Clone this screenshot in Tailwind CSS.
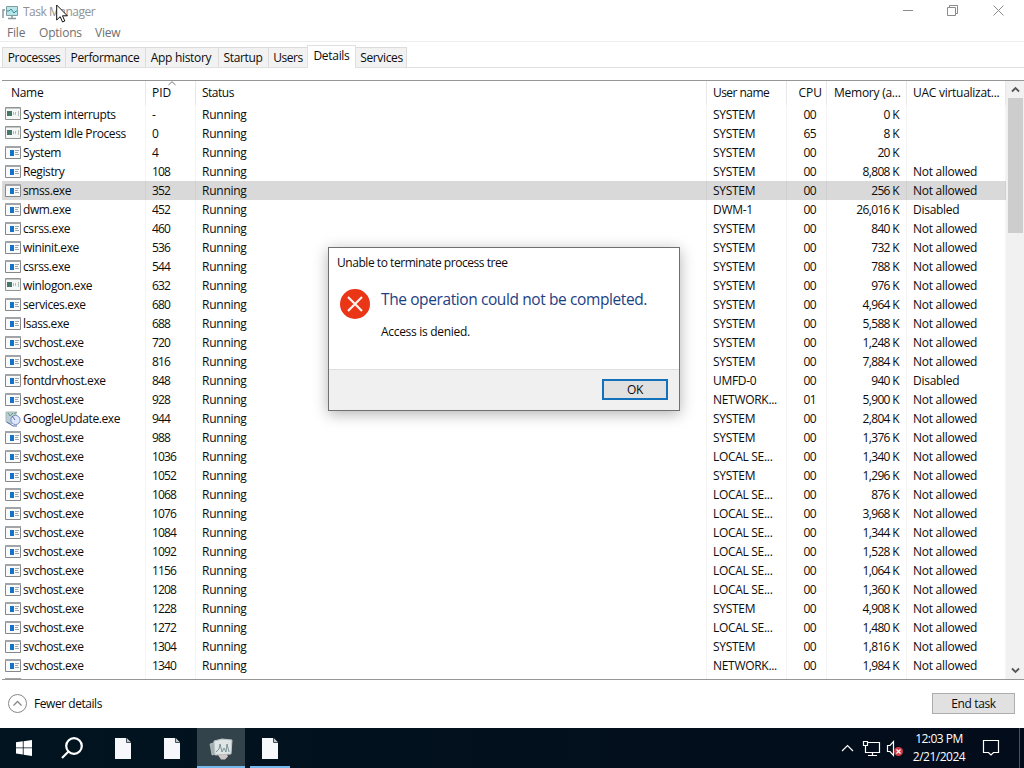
<!DOCTYPE html>
<html lang="en">
<head>
    <meta charset="UTF-8">
    <meta name="viewport" content="width=device-width, initial-scale=1.0">
    <title>Task Manager</title>
    <script src="https://cdn.jsdelivr.net/npm/@tailwindcss/browser@4"></script>
</head>
<body class="w-[1024px] h-[768px] overflow-hidden bg-white font-['Open_Sans','Noto_Sans',sans-serif] text-[12px] leading-[19px] text-[#0c0c0c]">
    <!-- Shared icons -->
    <svg class="hidden">
        <symbol id="icon-app" viewBox="0 0 16 13">
            <path d="M.5.5h15v12H.5z" fill="#fafafa" stroke="#85888b"/>
            <path d="M0 0h16v2H0z" fill="#a2a5a8"/>
            <path d="M5 4h4v6H5z" fill="#1473c8"/>
            <path d="M10 4.500h4M10 6.500h3M10 8.500h4" stroke="#9ba7b0"/>
        </symbol>
        <symbol id="icon-sys" viewBox="0 0 16 13">
            <path d="M.5.5h15v12H.5z" fill="#f5f7f6" stroke="#8f9392"/>
            <path d="M1 1.500h14" stroke="#c3c8c6"/>
            <path d="M2 4h5v5H2z" fill="#44776a"/>
            <path d="M8.500 5v3M10.500 5v3M13.500 4v5" stroke="#b5bdb9"/>
        </symbol>
        <symbol id="icon-update" viewBox="0 0 16 16">
            <path d="M1 1h10v9l-6 3-4-2z" fill="#b9cdd2" stroke="#a6bac0"/>
            <path d="M3 2l2 3 3-3M9 3l3-2" fill="none" stroke="#6d9d7c"/>
            <circle cx="10.500" cy="9" r="4.600" fill="#dfe7fa" stroke="#7b8fc4"/>
            <path d="M7 5l3 4M2 11l3 2 3 2h4" fill="none" stroke="#5369a6"/>
        </symbol>
        <symbol id="icon-file" viewBox="0 0 16 21">
            <path d="M0 0h11.500L16 4.500V21H0z" fill="#f6f8fb"/>
            <path d="M11.500 0v4.500H16" fill="#bcc5ca" stroke="#43515a"/>
        </symbol>
    </svg>

    <!-- Task Manager window -->
    <main class="flex h-[728px] flex-col">
        <header class="flex h-[24px] justify-between text-[#929292]">
            <div class="flex items-center">
                <svg class="ml-[2px] h-[15px] w-[17px]" viewBox="0 0 17 15" fill="none">
                    <path d="M4.500 1.500h11v9h-11z" fill="#b9e5e8" stroke="#829da2"/>
                    <path d="M5 6h2l2-2 3 4 2-2h1" stroke="#318e98"/>
                    <path d="M1 13V5h2M10 11v2M6 13.500h8" stroke="#87999e" stroke-width="1.500"/>
                </svg>
                <span class="-mt-px ml-[4px] tracking-[-0.5px]">Task Manager</span>
            </div>
            <svg class="h-[24px] w-[138px]" viewBox="0 0 138 24" fill="none" stroke="#8b8b8b">
                <path d="M17 10.500h10"/>
                <path d="M61.500 7.500h8v8h-8zM63.500 7v-1.500h8v8H70"/>
                <path d="M107.500 5.500l10 10M117.500 5.500l-10 10"/>
            </svg>
        </header>
        <nav class="flex h-[18px] gap-[14px] border-b border-[#ededed] pl-[7px] leading-[18px] tracking-[-0.2px] text-[#707070]">
            <span class="w-[18px]">File</span>
            <span class="w-[42px]">Options</span>
            <span>View</span>
        </nav>
        <div class="flex h-[26px] shrink-0 items-end border-b border-[#e0e0e0] pl-[2px] leading-[20px] tracking-[-0.35px] whitespace-nowrap">
            <div class="flex h-[20px] w-[63px] justify-center border border-r-0 border-b-0 border-[#dcdcdc] bg-[#f2f2f2]">Processes</div>
            <div class="flex h-[20px] w-[80px] justify-center border border-r-0 border-b-0 border-[#dcdcdc] bg-[#f2f2f2] pr-px">Performance</div>
            <div class="flex h-[20px] w-[73px] justify-center border border-r-0 border-b-0 border-[#dcdcdc] bg-[#f2f2f2] pr-[2px] tracking-[-0.3px]">App history</div>
            <div class="flex h-[20px] w-[50px] justify-center border border-r-0 border-b-0 border-[#dcdcdc] bg-[#f2f2f2] pr-px">Startup</div>
            <div class="flex h-[20px] w-[39px] justify-center border border-r-0 border-b-0 border-[#dcdcdc] bg-[#f2f2f2]  tracking-[-0.5px]">Users</div>
            <div class="-mb-px flex h-[23px] w-[49px] justify-center border-x border-t border-[#e0e0e0] bg-white tracking-[-0.3px]">Details</div>
            <div class="flex h-[20px] w-[51px] justify-center border border-l-0 border-b-0 border-[#dcdcdc] bg-[#f2f2f2] pl-px">Services</div>
        </div>
        <div class="h-[12px] shrink-0"></div>

        <!-- Process list -->
        <section class="ml-[2px] flex h-[600px] shrink-0 border-y border-[#969696]">
            <div class="relative w-[1004px] overflow-hidden">
                <div class="absolute inset-0 z-10 grid grid-cols-[144px_50px_511px_80px_40px_80px_99px] *:border-r *:border-black/4">
                    <i></i><i></i><i></i><i></i><i></i><i></i><i></i>
                </div>
                <div class="grid h-[24px] grid-cols-[144px_50px_511px_80px_40px_80px_99px] leading-[24px] whitespace-nowrap *:border-r *:border-black/5">
                    <span class="pl-[9px] tracking-[-0.3px]">Name</span>
                    <span class="relative pl-[6px]">PID
                        <svg class="absolute top-0 left-[22px] h-[5px] w-[8px]" viewBox="0 0 8 5" fill="none" stroke="#777"><path d="M.5 4L4 .7 7.500 4"/></svg>
                    </span>
                    <span class="pl-[6px] tracking-[-0.5px]">Status</span>
                    <span class="pl-[6px] tracking-[-0.55px]">User name</span>
                    <span class="pr-[4px] text-right">CPU</span>
                    <span class="pl-[7px] tracking-[-0.25px]">Memory (a...</span>
                    <span class="pl-[6px] tracking-[-0.27px]">UAC virtualizat...</span>
                </div>
                <div id="rows"></div>
            </div>
            <div class="flex w-[18px] flex-col items-center bg-[#f1f1f1]">
                <svg class="h-[17px] w-[17px] shrink-0" viewBox="0 0 17 17" fill="none" stroke="#555" stroke-width="1.800"><path d="M5 10.500l3.500-3.500 3.500 3.500"/></svg>
                <div class="h-[135px] w-[15px] bg-[#cdcdcd]"></div>
                <svg class="mt-auto h-[17px] w-[17px] shrink-0" viewBox="0 0 17 17" fill="none" stroke="#555" stroke-width="1.800"><path d="M5 6.500l3.500 3.500 3.500-3.500"/></svg>
            </div>
        </section>

        <footer class="flex h-[47px] items-center justify-between pr-[9px] pl-[8px]">
            <div class="flex items-center gap-[7px]">
                <svg class="h-[19px] w-[19px]" viewBox="0 0 19 19" fill="none" stroke="#888"><circle cx="9.500" cy="9.500" r="9"/><path d="M5.500 11.500l4-4 4 4" stroke-width="1.300"/></svg>
                <span class="tracking-[-0.45px]">Fewer details</span>
            </div>
            <button class="h-[21px] w-[83px] border border-[#adadad] bg-[#e1e1e1] leading-[19px] tracking-[-0.35px]">End task</button>
        </footer>
    </main>

    <!-- Error dialog -->
    <div class="absolute top-[247px] left-[328px] z-20 flex h-[164px] w-[352px] flex-col border border-[#707070] bg-white shadow-[0_3px_14px_rgba(0,0,0,0.3)]">
        <div class="pt-[5px] pl-[8px] tracking-[-0.45px]">Unable to terminate process tree</div>
        <div class="flex flex-1 pt-[16px] pl-[10px]">
            <svg class="h-[32px] w-[32px]" viewBox="0 0 32 32"><circle cx="16" cy="16" r="15" fill="#ea3517"/><path d="M9 9l14 14M23 9L9 23" stroke="#fff4ec" stroke-width="2.200"/></svg>
            <div class="pl-[10px]">
                <div class="-mt-px text-[15.500px] leading-[24px] tracking-[-0.4px] whitespace-nowrap text-[#1d3f83]">The operation could not be completed.</div>
                <div class="pt-[11px] tracking-[-0.3px]">Access is denied.</div>
            </div>
        </div>
        <div class="flex h-[41px] items-center justify-end border-t border-[#dfdfdf] bg-[#f0f0f0] pr-[11px] pb-[2px]">
            <button class="h-[21px] w-[66px] border-2 border-[#1370bb] bg-[#e1e1e1] leading-[17px] tracking-[-0.3px]">OK</button>
        </div>
    </div>

    <!-- Taskbar -->
    <div class="flex h-[40px] justify-between bg-gradient-to-r from-[#011420] to-[#030c1a] text-white">
        <div class="flex">
            <div class="flex w-[48px] items-center justify-center">
                <svg class="h-[16px] w-[16px]" viewBox="0 0 16 16" fill="#fff"><path d="M0 2.300l6.800-1v6.200H0zM7.600 1.200L16 0v7.500H7.600zM0 8.300h6.800v6.200L0 13.600zM7.600 8.300H16V16l-8.400-1.200z"/></svg>
            </div>
            <div class="flex w-[49px] items-center justify-center pr-[2px]">
                <svg class="h-[22px] w-[24px]" viewBox="0 0 24 22" fill="none" stroke="#fff" stroke-width="2.200"><circle cx="14" cy="9" r="7.800"/><path d="M8.500 14.500L2 21"/></svg>
            </div>
            <div class="flex w-[51px] items-center justify-center"><svg class="h-[21px] w-[16px]"><use href="#icon-file"/></svg></div>
            <div class="flex w-[49px] items-center justify-center pr-[2px]"><svg class="h-[21px] w-[16px]"><use href="#icon-file"/></svg></div>
            <div class="flex w-[48px] items-center justify-center border-b-2 border-[#76b9ed] bg-[#33434b]">
                <svg class="mt-[3px] h-[22px] w-[24px]" viewBox="0 0 24 22">
                    <path d="M1 6l6-2v12l-4 1z" fill="#a2adae" stroke="#c9d1d2" stroke-width=".6"/>
                    <path d="M5 3l8-2 10 1-1 14-16 1z" fill="#dfe5e5" stroke="#b9c3c4"/>
                    <path d="M7 14l3-3 1-5 2 8 2-4 2 4 1-8 2 8" fill="none" stroke="#6f898f" stroke-width=".9"/>
                    <path d="M9 17l9-.5 1 2-3 3h-4z" fill="#cfc5c5"/>
                </svg>
            </div>
            <div class="ml-[5px] flex w-[40px] items-center justify-center border-b-2 border-[#76b9ed] pr-[1px]"><svg class="mt-[2px] h-[21px] w-[16px]"><use href="#icon-file"/></svg></div>
        </div>
        <div class="flex">
            <svg class="h-[40px] w-[70px]" viewBox="0 0 70 40" fill="none" stroke="#fff" stroke-width="1.200">
                <path d="M8 23l5.500-5.500L19 23"/>
                <path d="M33 14.500h12.500v10H35M38.500 24.500v3M34 27.500h9M29.500 13.500h4v4h-4zM31.500 17.500v7h4"/>
                <path d="M53.500 17.500h2.500l3.500-4v14l-3.500-4h-2.500z"/>
                <circle cx="64.500" cy="23.500" r="4.500" fill="#d43a45" stroke="none"/>
                <path d="M62.500 21.500l4 4M66.500 21.500l-4 4"/>
            </svg>
            <div class="w-[70px] pt-[2px] text-center leading-[18px] tracking-[-0.5px] whitespace-nowrap">12:03 PM<br>2/21/2024</div>
            <svg class="h-[40px] w-[50px]" viewBox="0 0 50 40" fill="none" stroke="#fff" stroke-width="1.200"><path d="M9.500 12.500h15v12h-5l-2.500 2.500-2.500-2.500h-5z"/><path d="M45.500 0v40" stroke="#4a535e" stroke-width="1"/></svg>
        </div>
    </div>

    <script>
        // name, pid, user, cpu, memory, uac
        const data = [
            ['System interrupts', '-', 'SYSTEM', '00', '0', ''],
            ['System Idle Process', '0', 'SYSTEM', '65', '8', ''],
            ['System', '4', 'SYSTEM', '00', '20', ''],
            ['Registry', '108', 'SYSTEM', '00', '8,808', 'Not allowed'],
            ['smss.exe', '352', 'SYSTEM', '00', '256', 'Not allowed'],
            ['dwm.exe', '452', 'DWM-1', '00', '26,016', 'Disabled'],
            ['csrss.exe', '460', 'SYSTEM', '00', '840', 'Not allowed'],
            ['wininit.exe', '536', 'SYSTEM', '00', '732', 'Not allowed'],
            ['csrss.exe', '544', 'SYSTEM', '00', '788', 'Not allowed'],
            ['winlogon.exe', '632', 'SYSTEM', '00', '976', 'Not allowed'],
            ['services.exe', '680', 'SYSTEM', '00', '4,964', 'Not allowed'],
            ['lsass.exe', '688', 'SYSTEM', '00', '5,588', 'Not allowed'],
            ['svchost.exe', '720', 'SYSTEM', '00', '1,248', 'Not allowed'],
            ['svchost.exe', '816', 'SYSTEM', '00', '7,884', 'Not allowed'],
            ['fontdrvhost.exe', '848', 'UMFD-0', '00', '940', 'Disabled'],
            ['svchost.exe', '928', 'NETWORK...', '01', '5,900', 'Not allowed'],
            ['GoogleUpdate.exe', '944', 'SYSTEM', '00', '2,804', 'Not allowed'],
            ['svchost.exe', '988', 'SYSTEM', '00', '1,376', 'Not allowed'],
            ['svchost.exe', '1036', 'LOCAL SE...', '00', '1,340', 'Not allowed'],
            ['svchost.exe', '1052', 'SYSTEM', '00', '1,296', 'Not allowed'],
            ['svchost.exe', '1068', 'LOCAL SE...', '00', '876', 'Not allowed'],
            ['svchost.exe', '1076', 'LOCAL SE...', '00', '3,968', 'Not allowed'],
            ['svchost.exe', '1084', 'LOCAL SE...', '00', '1,344', 'Not allowed'],
            ['svchost.exe', '1092', 'LOCAL SE...', '00', '1,528', 'Not allowed'],
            ['svchost.exe', '1156', 'LOCAL SE...', '00', '1,064', 'Not allowed'],
            ['svchost.exe', '1208', 'LOCAL SE...', '00', '1,360', 'Not allowed'],
            ['svchost.exe', '1228', 'SYSTEM', '00', '4,908', 'Not allowed'],
            ['svchost.exe', '1272', 'LOCAL SE...', '00', '1,480', 'Not allowed'],
            ['svchost.exe', '1304', 'SYSTEM', '00', '1,816', 'Not allowed'],
            ['svchost.exe', '1340', 'NETWORK...', '00', '1,984', 'Not allowed'],
        ]
        const sysIcons = ['System interrupts', 'System Idle Process', 'winlogon.exe']

        const icon = name => {
            if (name === 'GoogleUpdate.exe') return '<svg class="h-[16px] w-[16px]"><use href="#icon-update"/></svg>'
            if (sysIcons.includes(name)) return '<svg class="mb-[2px] h-[13px] w-[16px]"><use href="#icon-sys"/></svg>'
            return '<svg class="mb-[1px] h-[13px] w-[16px]"><use href="#icon-app"/></svg>'
        }

        document.getElementById('rows').innerHTML = data.map(([name, pid, user, cpu, mem, uac]) => `
            <div class="grid h-[19px] grid-cols-[144px_50px_511px_80px_40px_80px_99px] leading-[20px] whitespace-nowrap ${name === 'smss.exe' ? 'bg-[#d9d9d9]' : ''}">
                <span class="flex h-[19px] items-center gap-[2px] pl-[3px] tracking-[-0.4px]">${icon(name)}${name}</span>
                <span class="pl-[6px] tracking-[-0.85px]">${pid}</span>
                <span class="pl-[6px] tracking-[-0.25px]">Running</span>
                <span class="pl-[6px] tracking-[-0.3px]">${user}</span>
                <span class="pr-[11px] text-right tracking-[-0.6px]">${cpu}</span>
                <span class="pr-[8px] text-right tracking-[-0.65px]">${mem} K</span>
                <span class="pl-[6px] tracking-[-0.27px]">${uac}</span>
            </div>`).join('') + '<svg class="mt-[3px] ml-[3px] h-[13px] w-[16px]"><use href="#icon-app"/></svg>'
    </script>

    <!-- Mouse pointer -->
    <svg class="absolute top-[4px] left-[56px] z-30 h-[19px] w-[12px]" viewBox="0 0 12 19" fill="#fff" stroke="#111"><path d="M.7 1v15l3.500-3.300 2.300 5.300 2.300-1-2.300-5.200h4.800z"/></svg>
</body>
</html>
